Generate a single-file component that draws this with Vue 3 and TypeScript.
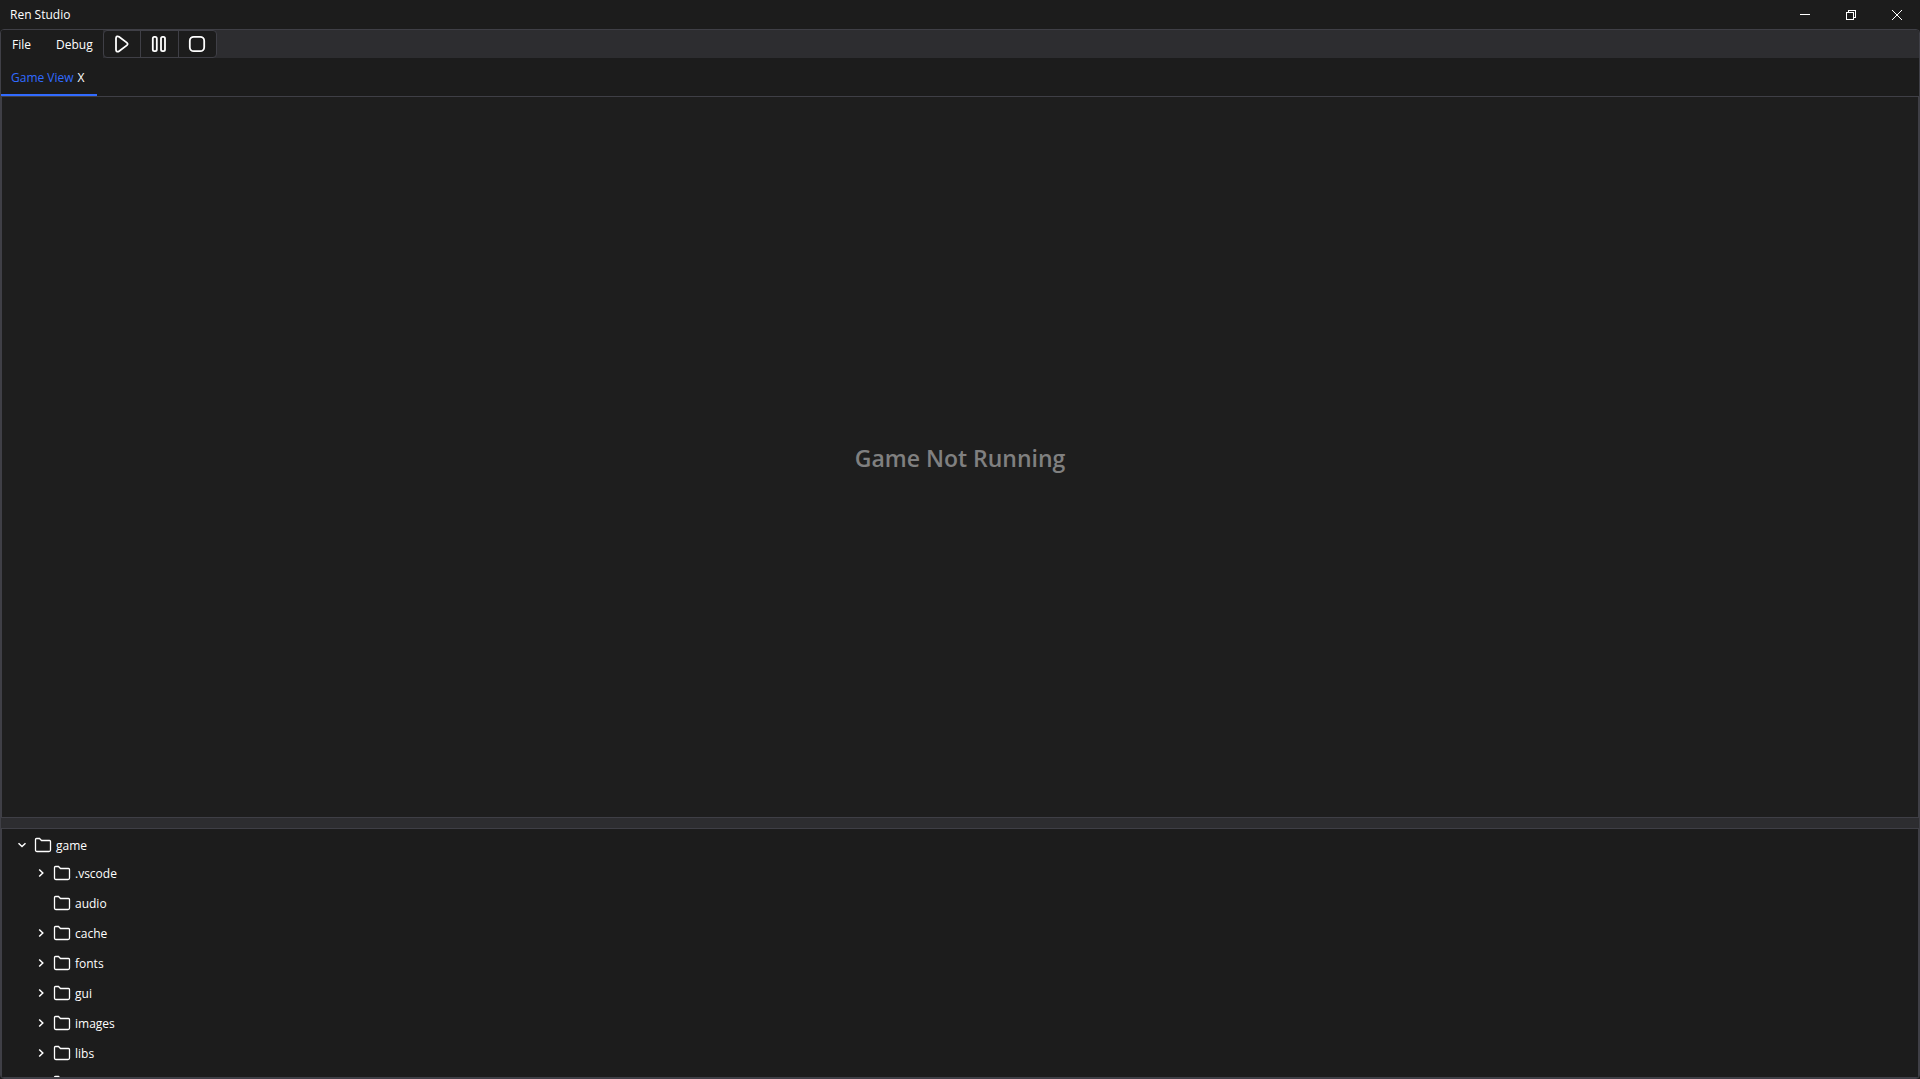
<script setup lang="ts">
import { ref } from 'vue'

interface TreeNode {
  name: string
  expandable: boolean
}

const folders = ref<TreeNode[]>([
  { name: '.vscode', expandable: true },
  { name: 'audio', expandable: false },
  { name: 'cache', expandable: true },
  { name: 'fonts', expandable: true },
  { name: 'gui', expandable: true },
  { name: 'images', expandable: true },
  { name: 'libs', expandable: true },
  { name: '', expandable: true },
])
</script>

<template>
  <div class="window">
    <header class="titlebar">
      <span class="title">Ren Studio</span>
      <div class="caption">
        <button aria-label="Minimize">
          <svg width="12" height="12" viewBox="0 0 12 12" shape-rendering="crispEdges"><path d="M1 5.5h10" /></svg>
        </button>
        <button aria-label="Restore">
          <svg width="12" height="12" viewBox="0 0 12 12" shape-rendering="crispEdges"><path d="M1.5 3.5h7v7h-7zM3.5 3.5v-2h7v7h-2" /></svg>
        </button>
        <button aria-label="Close">
          <svg width="12" height="12" viewBox="0 0 12 12"><path d="M1 1l10 10M11 1L1 11" /></svg>
        </button>
      </div>
    </header>

    <div class="frame">
      <div class="toolbar">
        <nav class="menu">
          <button>File</button>
          <button>Debug</button>
        </nav>
        <div class="controls">
          <button aria-label="Play">
            <svg width="20" height="20" viewBox="0 0 20 20"><path d="M4 4.2C4 2.300 5.6 1.8 7 2.8L14.800 8.600C15.900 9.500 15.900 10.500 14.800 11.400L7 17.200C5.600 18.200 4 17.700 4 15.800Z" /></svg>
          </button>
          <button aria-label="Pause">
            <svg width="20" height="20" viewBox="0 0 20 20"><rect x="3.8" y="2.8" width="4" height="14.4" rx="1.6" /><rect x="12" y="2.8" width="4" height="14.4" rx="1.6" /></svg>
          </button>
          <button aria-label="Stop">
            <svg width="20" height="20" viewBox="0 0 20 20"><rect x="2.8" y="2.8" width="14.4" height="14.4" rx="4" /></svg>
          </button>
        </div>
      </div>

      <div class="tabs">
        <div class="tab">
          <span>Game View</span>
          <button aria-label="Close Game View">X</button>
        </div>
      </div>

      <main class="view">
        <h1>Game Not Running</h1>
      </main>

      <div class="splitter"></div>

      <section class="explorer">
        <div class="row root">
          <svg class="arrow" width="10" height="10" viewBox="0 0 10 10"><path d="M1.5 3.2L5 6.5L8.5 3.2" /></svg>
          <svg class="folder" width="18" height="16" viewBox="0 0 18 16"><path d="M1.5 13V2.5Q1.5 1.5 2.5 1.5H5.5L7.5 3.5H15.5Q16.5 3.5 16.5 4.5V13Q16.5 14.5 15 14.5H3Q1.5 14.5 1.5 13Z" /></svg>
          <span>game</span>
        </div>
        <div v-for="node in folders" :key="node.name" class="row child">
          <svg class="arrow" width="10" height="10" viewBox="0 0 10 10"><path v-if="node.expandable" d="M3.2 1.5L6.8 5L3.2 8.5" /></svg>
          <svg class="folder" width="18" height="16" viewBox="0 0 18 16"><path d="M1.5 13V2.5Q1.5 1.5 2.5 1.5H5.5L7.5 3.5H15.5Q16.5 3.5 16.5 4.5V13Q16.5 14.5 15 14.5H3Q1.5 14.5 1.5 13Z" /></svg>
          <span>{{ node.name }}</span>
        </div>
      </section>
    </div>
  </div>
</template>

<style>
body {
  background: #1c1c1c;
}
</style>

<style scoped>
* {
  box-sizing: border-box;
}
.window {
  display: flex;
  flex-direction: column;
  height: 100vh;
  overflow: hidden;
  background: #1c1c1c;
  color: #fff;
  font: 12px/16px "Open Sans", "Noto Sans", sans-serif;
}
button {
  display: flex;
  align-items: center;
  justify-content: center;
  margin: 0;
  padding: 0;
  border: 0;
  background: none;
  color: inherit;
  font: inherit;
}
svg {
  display: block;
  flex: none;
  fill: none;
  stroke: #fff;
}
.titlebar {
  display: flex;
  flex: none;
  align-items: center;
  justify-content: space-between;
  height: 29px;
  padding-left: 10px;
}
.caption {
  display: flex;
  height: 100%;
}
.caption button {
  width: 46px;
}
.frame {
  display: flex;
  flex: 1;
  flex-direction: column;
  min-height: 0;
  overflow: hidden;
  border: 1px solid #3f3f46;
  border-radius: 4px;
}
.toolbar {
  display: flex;
  flex: none;
  height: 28px;
  background: #2d2d30;
}
.menu {
  display: flex;
  background: #1c1c1c;
}
.menu button {
  padding: 2px 11px 0;
}
.menu button + button {
  padding: 2px 10px 0 14px;
}
.controls {
  display: flex;
  border: 1px solid #3f3f46;
  border-radius: 4px;
  background: #1c1c1c;
}
.controls button {
  width: 36px;
}
.controls button + button {
  width: 38px;
  border-left: 1px solid #3f3f46;
}
.controls svg {
  stroke-width: 1.8;
}
.tabs {
  display: flex;
  flex: none;
  height: 38px;
}
.tab {
  display: flex;
  align-items: center;
  gap: 4px;
  padding: 4px 12px 0 10px;
  border-bottom: 2px solid #316bff;
  color: #316bff;
}
.tab button {
  color: #fff;
}
.view {
  display: flex;
  flex: 1;
  align-items: center;
  justify-content: center;
  min-height: 0;
  padding-top: 2px;
  border: 1px solid #3f3f46;
  background: #1e1e1e;
}
h1 {
  margin: 0;
  color: #808080;
  font-size: 23px;
  font-weight: 600;
  line-height: 32px;
}
.splitter {
  flex: none;
  height: 10px;
  background: #2d2d30;
}
.explorer {
  flex: none;
  height: 250px;
  padding-top: 3px;
  overflow: hidden;
  border: 1px solid #3f3f46;
}
.row {
  display: flex;
  align-items: center;
  height: 30px;
  padding-left: 34px;
}
.row span {
  padding-top: 2px;
}
.root {
  height: 26px;
  padding-left: 15px;
}
.arrow {
  margin-right: 7px;
  stroke-width: 1.5;
}
.folder {
  margin-right: 4px;
  stroke-width: 1.3;
}
</style>
